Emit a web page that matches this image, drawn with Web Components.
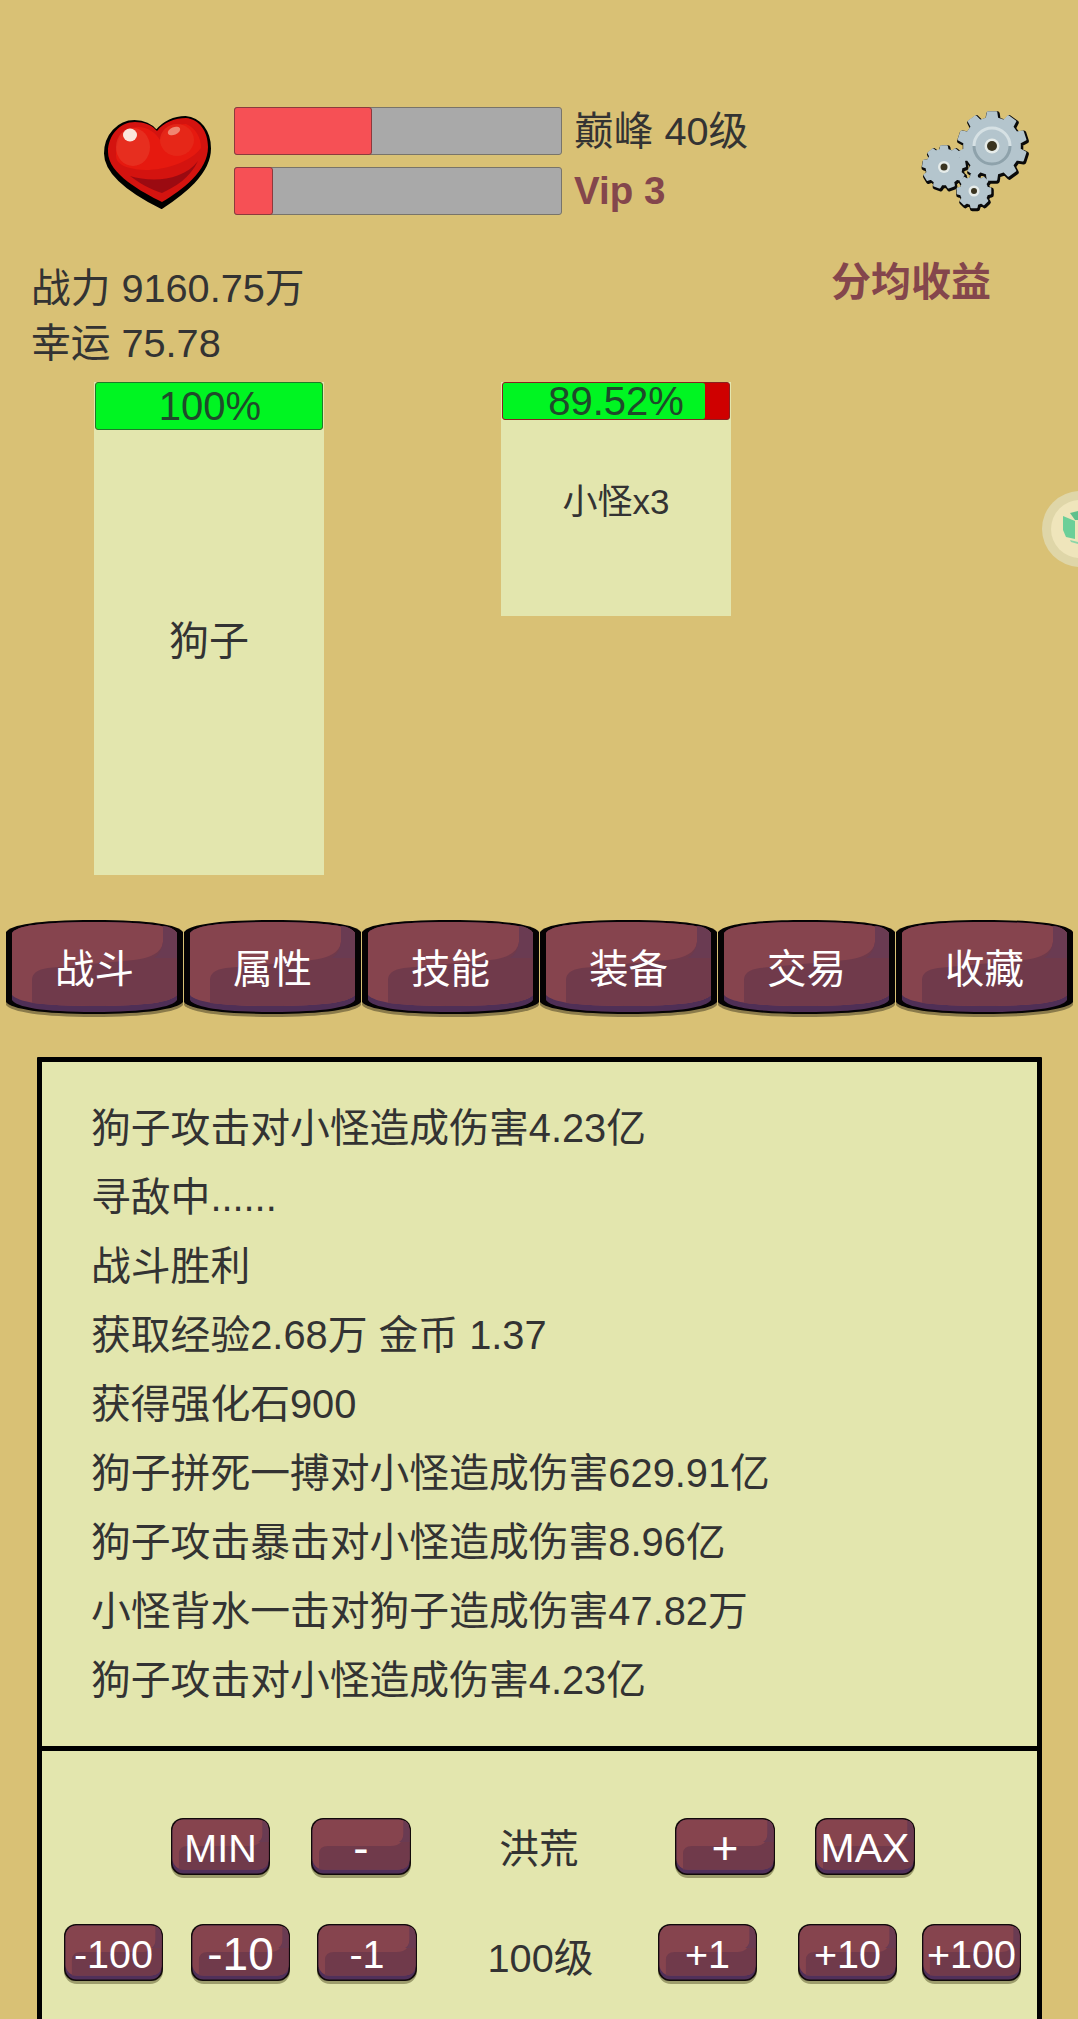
<!DOCTYPE html>
<html lang="zh">
<head>
<meta charset="utf-8">
<title>战斗</title>
<style>
    html, body { margin: 0; height: 2019px; overflow: hidden; background: #d9c175; }
    body { font: 39.7px "Liberation Sans", "Noto Sans CJK SC", sans-serif; color: #333; }
</style>
</head>
<body>
<game-app></game-app>

<script>
// Bouton marron : le fond est dessiné en SVG, le texte passe par le slot
class GameButton extends HTMLElement
{
    constructor()
    {
        super();
        this._root = this.attachShadow({ mode: 'open' });
    }

    connectedCallback() {
        const isTab = this.hasAttribute('tab');
        const size = this.getAttribute('size') || 39.5;
        const art = isTab ? `
            <svg viewBox="0 0 177 98" preserveAspectRatio="none">
                <path d="M0 12 C5 5 30 0 88 0 S172 5 177 12 V82 C172 89 140 94 88 94 S5 89 0 82Z" fill="#000" opacity=".36" transform="translate(0 3)"/>
                <path d="M0 12 C5 5 30 0 88 0 S172 5 177 12 V82 C172 89 140 94 88 94 S5 89 0 82Z" fill="#050304"/>
                <path d="M6 13 C10 6 34 2 88 2 S167 6 171 13 V80 C167 87 140 92 88 92 S10 87 6 80Z" fill="#4f2f56"/>
                <path d="M6 13 C10 6 34 2 88 2 S167 6 171 13 V75 C165 82 140 86 88 86 S12 82 6 75Z" fill="#86444e"/>
                <path d="M26 83 V60 Q26 50 42 48 L128 40 Q155 37 157 22 V6 Q167 7 171 13 V75 C165 82 140 86 88 86 Q50 86 26 83Z" fill="#703a4b"/>
                <path d="M157 22 V6 Q167 7 171 13 V38 H148 Q156 32 157 22Z" fill="#6a3b52"/>
            </svg>` : `
            <svg viewBox="0 0 100 60" preserveAspectRatio="none">
                <rect x="0" y="3" width="100" height="57" rx="13" fill="#3c3a10" opacity=".42"/>
                <rect x="0" y="0" width="100" height="57" rx="12" fill="#120a0a"/>
                <rect x="1.5" y="1.5" width="97" height="54" rx="11" fill="#50305a"/>
                <rect x="1.5" y="1.5" width="97" height="50" rx="11" fill="#86444e"/>
                <path d="M8 51.5 V36 Q8 28 17 28 H80 Q92 28 92.5 16 V2.5 Q98.5 4 98.5 12 V42 Q98.5 51 88 51.5Z" fill="#703a4b"/>
                <path d="M92.5 16 V2.5 Q98.5 4 98.5 12 V24 H88 Q92 22 92.5 16Z" fill="#6a3b52"/>
            </svg>`;
        this._root.innerHTML = `
            <style>
                :host { display: block; position: relative; height: ${isTab ? 98 : 60}px; color: #fff; }
                svg { position: absolute; inset: 0; width: 100%; height: 100%; display: block; }
                span {
                    position: relative; display: flex; align-items: center; justify-content: center;
                    height: ${isTab ? 90 : 60}px; font-size: ${size}px; white-space: nowrap;
                }
            </style>
            ${art}
            <span><slot></slot></span>
        `;
    }
}

// Barre de vie / barre de progression
class StatBar extends HTMLElement
{
    constructor()
    {
        super();
        this._root = this.attachShadow({ mode: 'open' });
    }

    connectedCallback() {
        this._root.innerHTML = `
            <style>
                :host { display: block; width: 328px; height: 48px; box-sizing: border-box; background: #a9a9a9;
                        border: 1px solid #78746a; border-radius: 3px; }
                div { box-sizing: border-box; background: #f65055; margin: -1px 0 0 -1px;
                      height: 48px; border: 1px solid #8c3a3c; border-radius: 3px; }
            </style>
            <div style="width:${this.getAttribute('fill')}px"></div>
        `;
    }
}

// En-tête : coeur, barres, niveau, engrenages
class StatusHeader extends HTMLElement
{
    constructor()
    {
        super();
        this._root = this.attachShadow({ mode: 'open' });
    }

    // contour d'une roue dentée
    gearPath(cx, cy, outer, inner, teeth) {
        let d = '';
        const step = Math.PI * 2 / teeth;
        for (let i = 0; i < teeth; i++) {
            const a = i * step - Math.PI / 2;
            const pts = [
                [inner, a - step * 0.3], [outer, a - step * 0.2],
                [outer, a + step * 0.2], [inner, a + step * 0.3]
            ];
            for (const [r, t] of pts) {
                d += (d ? 'L' : 'M') + (cx + r * Math.cos(t)).toFixed(1) + ' ' + (cy + r * Math.sin(t)).toFixed(1);
            }
        }
        return d + 'Z';
    }

    gearSvg() {
        const gears = [
            [112, 56, 34, 28, 10, 5],
            [64, 77, 21, 17.5, 9, 3.5],
            [94, 101, 16.5, 13.5, 8, 3]
        ];
        let shadow = '';
        let body = '';
        for (const [x, y, o, i, t, h] of gears) {
            const d = this.gearPath(x, y, o, i, t);
            shadow += `<path d="${d}" fill="#0a0a0a" stroke="#0a0a0a" stroke-width="5" stroke-linejoin="round" transform="translate(1 1.5)"/>`;
            body += `<path d="${d}" fill="#b4c5cd" stroke="#b4c5cd" stroke-width="2" stroke-linejoin="round"/>`;
            body += `<circle cx="${x}" cy="${y}" r="${h + 2.5}" fill="#e6ecea"/><circle cx="${x}" cy="${y}" r="${h}" fill="#3a3420"/>`;
        }
        return `
            <svg class="gears" viewBox="0 0 198 140" width="198" height="140">
                <defs><linearGradient id="g" x1="0" y1="1" x2="0" y2="0"><stop offset=".5" stop-color="#8ea2ab"/><stop offset=".5" stop-color="#d6e1e4"/></linearGradient></defs>
                ${shadow}${body}
                <circle cx="112" cy="56" r="18" fill="none" stroke="url(#g)" stroke-width="3"/>
            </svg>`;
    }

    connectedCallback() {
        this._root.innerHTML = `
            <style>
                :host { display: flex; align-items: flex-start; padding-top: 90px; height: 140px; }
                .heart { margin: 10px 14px 0 90px; flex: none; }
                .bars { display: grid; grid-template-columns: 328px auto; column-gap: 12px; row-gap: 12px;
                        padding-top: 17px; align-items: center; }
                .level { line-height: 48px; white-space: nowrap; }
                .vip { line-height: 48px; font-size: 38.5px; font-weight: bold; color: #84464c; white-space: nowrap; }
                .gears { margin-left: auto; flex: none; }
            </style>
            <svg class="heart" viewBox="0 0 130 120" width="130" height="120">
                <path d="M67 30 C74 21 85 16 96 16 C110 17 120 30 120 47 C120 72 93 92 72 106 C52 96 16 76 16 52 C16 34 29 20 45 20 C54 20 62 24 67 30Z" fill="#000" stroke="#000" stroke-width="3" stroke-linejoin="round" transform="translate(-.5 1.5)"/>
                <path d="M67 31 C74 22 85 18 96 18 C109 19 118 31 118 47 C118 71 92 90 72 102 C52 92 18 74 18 52 C18 35 30 22 45 22 C54 22 62 25 67 31Z" fill="#d4130f"/>
                <path d="M26 56 C26 38 34 27 48 27 C58 27 66 33 70 40 C75 30 86 24 96 24 C106 28 111 38 111 48 C98 66 60 74 40 68 C32 66 26 62 26 56Z" fill="#e6190f"/>
                <path d="M40 76 C60 82 92 82 108 61 C100 78 85 87 72 93 C60 89 49 83 40 76Z" fill="#9b0a11"/>
                <ellipse cx="43" cy="47" rx="17" ry="19" fill="#e8402e" opacity=".55"/>
                <ellipse cx="87" cy="40" rx="17" ry="16" fill="#e62a1a" opacity=".8"/>
                <ellipse cx="40" cy="35" rx="7" ry="6.5" fill="#fbe6dc"/>
                <ellipse cx="84" cy="31" rx="6.5" ry="3.8" fill="#f08672" transform="rotate(-22 84 31)"/>
            </svg>
            <div class="bars">
                <stat-bar fill="138"></stat-bar><div class="level">巅峰 40级</div>
                <stat-bar fill="39"></stat-bar><div class="vip">Vip 3</div>
            </div>
            ${this.gearSvg()}
        `;
    }
}

// Carte d'un combattant avec sa barre de vie
class FighterCard extends HTMLElement
{
    constructor()
    {
        super();
        this._root = this.attachShadow({ mode: 'open' });
    }

    connectedCallback() {
        const hp = this.getAttribute('hp');
        const hurt = parseFloat(hp) < 100;
        this._root.innerHTML = `
            <style>
                :host { display: flex; flex-direction: column; width: 230px; background: #e3e6ae; }
                .bar { position: relative; height: ${this.getAttribute('bar')}px; margin: 0 1px; box-sizing: border-box; background: #cf0000;
                       border: 1px solid ${hurt ? '#8a2020' : '#1f7a28'}; border-radius: 3px; }
                .fill { height: 100%; background: #00f522; width: ${hp}%; border-radius: 2px; }
                .pct { position: absolute; inset: 0; display: flex; justify-content: center; align-items: center;
                       font-size: 40px; line-height: 36px; color: #1f4a2a; padding-left: ${hurt ? 0 : 2}px; }
                .name { flex: 1; display: flex; align-items: center; justify-content: center;
                        font-size: ${this.getAttribute('size')}px; padding-bottom: ${this.getAttribute('drop')}px; }
            </style>
            <div class="bar"><div class="fill"></div><div class="pct">${hp}%</div></div>
            <div class="name"><slot></slot></div>
        `;
    }
}

// Journal de combat + réglages du niveau
class BattlePanel extends HTMLElement
{
    constructor()
    {
        super();
        this._root = this.attachShadow({ mode: 'open' });
        this._lines = [
            '狗子攻击对小怪造成伤害4.23亿',
            '寻敌中......',
            '战斗胜利',
            '获取经验2.68万 金币 1.37',
            '获得强化石900',
            '狗子拼死一搏对小怪造成伤害629.91亿',
            '狗子攻击暴击对小怪造成伤害8.96亿',
            '小怪背水一击对狗子造成伤害47.82万',
            '狗子攻击对小怪造成伤害4.23亿'
        ];
    }

    connectedCallback() {
        this._root.innerHTML = `
            <style>
                :host { display: block; margin: 0 36px 0 37px; background: #e3e6ae; height: 1000px;
                        border: 5px solid #000; border-radius: 1px; }
                .log { padding: 32px 0 31px 49px; border-bottom: 5px solid #000; font-size: 39.8px; }
                .log div { height: 69px; line-height: 69px; white-space: nowrap; }
                .row { display: flex; align-items: flex-start; }
                .row game-button { flex: none; }
                .r1 { padding: 67px 0 0 129px; }
                .r2 { padding: 45px 0 0 22px; }
                .lbl { flex: none; text-align: center; line-height: 60px; }
                .r2 .lbl { padding-top: 4px; }
                .r1 .lbl { padding-top: 1px; }
            </style>
            <div class="log">${this._lines.map(l => `<div>${l}</div>`).join('')}</div>
            <div class="row r1">
                <game-button style="width:99px">MIN</game-button>
                <game-button size="46" style="width:100px;margin-left:41px">-</game-button>
                <div class="lbl" style="width:256px">洪荒</div>
                <game-button size="46" style="width:100px;margin-left:8px">+</game-button>
                <game-button size="41" style="width:100px;margin-left:40px">MAX</game-button>
            </div>
            <div class="row r2">
                <game-button style="width:99px">-100</game-button>
                <game-button size="46" style="width:99px;margin-left:28px">-10</game-button>
                <game-button style="width:100px;margin-left:27px">-1</game-button>
                <div class="lbl" style="width:247px">100级</div>
                <game-button style="width:99px;margin-left:-6px">+1</game-button>
                <game-button style="width:99px;margin-left:41px">+10</game-button>
                <game-button style="width:99px;margin-left:25px">+100</game-button>
            </div>
        `;
    }
}

class GameApp extends HTMLElement
{
    constructor()
    {
        super();
        this._root = this.attachShadow({ mode: 'open' });
        this._tabs = ['战斗', '属性', '技能', '装备', '交易', '收藏'];
    }

    connectedCallback() {
        this._root.innerHTML = `
            <style>
                :host { display: block; position: relative; height: 2019px; overflow: hidden; }
                .stats { display: flex; justify-content: space-between; margin-top: 31px; height: 121px; padding: 0 0 0 31px; }
                .stats .line { height: 55px; line-height: 55px; white-space: nowrap; }
                .earn { font-size: 40px; font-weight: bold; color: #84464c; margin: -6px 87px 0 0; line-height: 55px; }
                .fighters { display: flex; align-items: flex-start; gap: 177px; padding-left: 94px; height: 538px; }
                .tabs { display: flex; gap: 1px; padding-left: 6px; height: 137px; }
                .tabs game-button { width: 177px; flex: none; }
                .side { position: absolute; right: 0; top: 490px; }
            </style>
            <status-header></status-header>
            <div class="stats">
                <div><div class="line">战力 9160.75万</div><div class="line">幸运 75.78</div></div>
                <div class="earn">分均收益</div>
            </div>
            <div class="fighters">
                <fighter-card hp="100" bar="48" size="40" drop="30" style="height:493px">狗子</fighter-card>
                <fighter-card hp="89.52" bar="38" size="35" drop="40" style="height:234px">小怪x3</fighter-card>
            </div>
            <div class="tabs">
                ${this._tabs.map(t => `<game-button tab>${t}</game-button>`).join('')}
            </div>
            <battle-panel></battle-panel>
            <svg class="side" width="36" height="78" viewBox="0 0 36 78">
                <circle cx="38" cy="39" r="38" fill="#dfd6a8"/>
                <circle cx="38" cy="39" r="29" fill="#efe5bb"/>
                <path d="M21 26 L33 31 V49 L24 47 L21 40Z" fill="#6ccf98"/>
                <path d="M28 23 L36 21 V30 L33 30Z" fill="#5fc08c"/>
                <path d="M28 50 L36 52 V54 L29 52Z" fill="#8ad6a8"/>
            </svg>
        `;
    }
}

window.customElements.define('game-button', GameButton);
window.customElements.define('stat-bar', StatBar);
window.customElements.define('status-header', StatusHeader);
window.customElements.define('fighter-card', FighterCard);
window.customElements.define('battle-panel', BattlePanel);
window.customElements.define('game-app', GameApp);
</script>
</body>
</html>
